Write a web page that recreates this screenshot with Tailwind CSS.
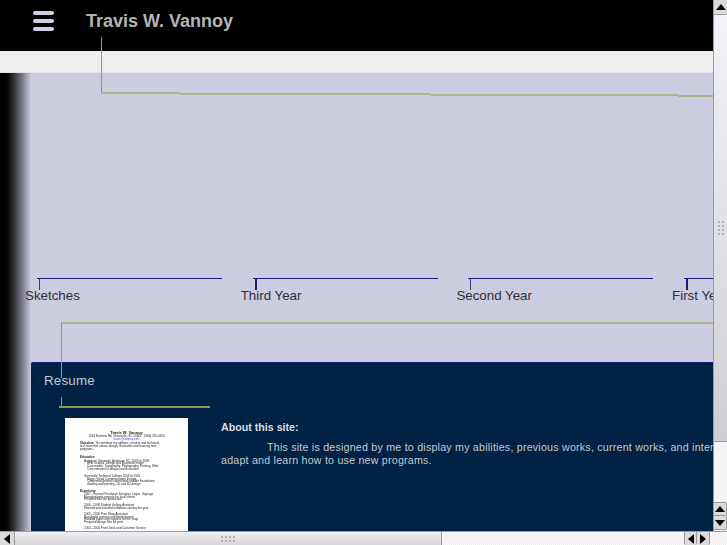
<!DOCTYPE html>
<html lang="en">
<head>
    <meta charset="UTF-8">
    <title>Travis W. Vannoy</title>
    <script src="https://cdn.jsdelivr.net/npm/@tailwindcss/browser@4"></script>
</head>
<body class="w-[727px] h-[545px] overflow-hidden bg-[#f6f6f6] font-['Liberation_Sans',sans-serif]">
    <div class="flex h-[531px]">
        <!-- Viewport -->
        <div class="relative w-[713px] flex flex-col overflow-hidden">
            <!-- Header -->
            <header class="h-[51px] bg-black flex items-start shrink-0">
                <div class="ml-[33px] mt-[11px] w-[21px] flex flex-col gap-[4.5px]">
                    <div class="h-[3.5px] rounded-full bg-[#cfcfe3]"></div>
                    <div class="h-[3.5px] rounded-full bg-[#cfcfe3]"></div>
                    <div class="h-[3.5px] rounded-full bg-[#cfcfe3]"></div>
                </div>
                <h1 class="ml-[32px] mt-[11px] text-[18px] leading-[21px] font-bold text-[#b4b4b4]">Travis W. Vannoy</h1>
            </header>
            <div class="h-[22px] bg-[#eeeeee] border-b border-[#e2e2e8] shrink-0"></div>

            <!-- Content -->
            <main class="relative flex-1 bg-[#cccce0] overflow-hidden">
                <div class="absolute left-0 top-0 bottom-0 w-[31px] bg-gradient-to-r from-black from-[10%] to-[#cccce0]"></div>

                <!-- Gallery tabs -->
                <div class="absolute left-[25px] top-[205px] flex gap-[18.7px] text-[13.33px] leading-[16px] text-[#2e2e38] whitespace-nowrap">
                    <div class="w-[197px]">
                        <div class="ml-[12px] w-[185px] h-px bg-[#1a1a80]"></div>
                        <div class="ml-[14px] w-px h-[11px] bg-[#3a3a90]"></div>
                        <p class="mt-[-2px]">Sketches</p>
                    </div>
                    <div class="w-[197px]">
                        <div class="ml-[12px] w-[185px] h-px bg-[#1a1a80]"></div>
                        <div class="ml-[14px] w-[2px] h-[11px] bg-[#1a1a80]"></div>
                        <p class="mt-[-2px]">Third Year</p>
                    </div>
                    <div class="w-[197px]">
                        <div class="ml-[12px] w-[185px] h-px bg-[#1a1a80]"></div>
                        <div class="ml-[14px] w-px h-[11px] bg-[#3a3a90]"></div>
                        <p class="mt-[-2px]">Second Year</p>
                    </div>
                    <div class="w-[197px]">
                        <div class="ml-[12px] w-[185px] h-px bg-[#1a1a80]"></div>
                        <div class="ml-[14px] w-[2px] h-[11px] bg-[#1a1a80]"></div>
                        <p class="mt-[-2px]">First Year</p>
                    </div>
                </div>

                <!-- Resume panel -->
                <section class="absolute left-[31px] top-[289px] w-[700px] h-[180px] bg-[#002244] border-t border-[#1a1a80] rounded-tl-[2px]">
                    <h2 class="ml-[13px] mt-[10px] text-[13.33px] leading-[16px] tracking-[0.2px] text-[#c4c8d4]">Resume</h2>
                    <div class="ml-[28px] mt-[17px] w-[151px] h-[2px] bg-[#97954f]"></div>
                    <div class="flex mt-[10px]">
                        <div class="ml-[34px] w-[123px] h-[140px] bg-white shrink-0 overflow-hidden pl-[15px] pt-[14px] text-[3px] leading-[2.8px] text-[#222] whitespace-nowrap blur-[0.3px]">
                            <p class="pr-[15px] text-center text-[4px] font-bold">Travis W. Vannoy</p>
                            <p class="pr-[15px] text-center">1234 Fairview Rd, Greenville, SC 29601 · (864) 555-0100</p>
                            <p class="pr-[15px] text-center text-[#44f]">travis@vannoy.com</p>
                            <p class="mt-[2px]"><b>Objective:</b> To contribute my abilities, creative and technical,</p>
                            <p>to a team that values design, illustration and learning new</p>
                            <p>programs.</p>
                            <p class="mt-[5px] font-bold">Education</p>
                            <p class="ml-[4px] mt-[1px]">Anderson University, Anderson SC, 2005 to 2009</p>
                            <p class="ml-[7px]">BFA, Graphic Design and Illustration major</p>
                            <p class="ml-[7px]">Coursework: Typography, Photography, Printing, Web</p>
                            <p class="ml-[7px]">Concentration in design and illustration</p>
                            <p class="ml-[4px] mt-[4px]">Greenville Technical College 2003 to 2005</p>
                            <p class="ml-[7px]">Major: Visual Communication Design</p>
                            <p class="ml-[7px]">Completed general coursework and Art Foundation</p>
                            <p class="ml-[7px]">drawing and painting, 2D and 3D design</p>
                            <p class="mt-[4px] font-bold">Experience</p>
                            <p class="ml-[4px]">2007 - Present Freelance Designer, Logos, Signage</p>
                            <p class="ml-[4px]">Managed print projects for local clients</p>
                            <p class="ml-[4px]">Prepared files for production</p>
                            <p class="ml-[4px] mt-[3px]">2006 - 2008 Student Gallery Assistant</p>
                            <p class="ml-[4px]">Planned and installed exhibitions during the year</p>
                            <p class="ml-[4px] mt-[3px]">2005 - 2006 Print Shop Assistant</p>
                            <p class="ml-[4px]">Ran digital presses and finished work</p>
                            <p class="ml-[4px]">Handled paper and supplies for the shop</p>
                            <p class="ml-[4px]">Prepared design files for print</p>
                            <p class="ml-[4px] mt-[3px]">2004 - 2005 Front Desk and Customer Service</p>
                        </div>
                        <div class="ml-[33px] mt-[3px] w-[520px] shrink-0 text-[10.67px] leading-[13px] tracking-[0.22px] text-[#c6c8cf] whitespace-nowrap">
                            <p class="font-bold text-[#dcdce4] tracking-[0px]">About this site:</p>
                            <p class="mt-[7px] indent-[46px]">This site is designed by me to display my abilities, previous works, current works, and interests.</p>
                            <p>adapt and learn how to use new programs.</p>
                        </div>
                    </div>
                </section>

                <!-- Olive guide lines over the content -->
                <div class="absolute left-[61px] top-[249px] w-[660px] h-[56px] border-t-2 border-l border-[#b4b28a] border-l-[#9c9a55]"></div>
                <div class="absolute left-[61px] top-[324px] w-px h-[10px] bg-[#97954f]"></div>
            </main>

            <!-- Lines running from the header -->
            <div class="absolute left-[101px] top-[37px] w-px h-[57px] bg-[#9c9a55]"></div>
            <div class="absolute left-[101px] top-[92px] w-[79px] h-[2px] bg-[#b4b28a]"></div>
            <div class="absolute left-[180px] top-[93px] w-[250px] h-[2px] bg-[#b4b28a]"></div>
            <div class="absolute left-[430px] top-[94px] w-[248px] h-[2px] bg-[#b4b28a]"></div>
            <div class="absolute left-[678px] top-[95px] w-[35px] h-[2px] bg-[#b4b28a]"></div>
        </div>

        <!-- Vertical scrollbar -->
        <div class="w-[14px] flex flex-col border-l border-[#9a9aa0] bg-[repeating-conic-gradient(#efefef_0_25%,#fbfbfb_0_50%)] bg-[length:2px_2px]">
            <div class="h-[15px] flex items-center justify-center bg-[#dcdcdc] border-b border-[#9a9a9a]">
                <svg width="10" height="6" viewBox="0 0 10 6"><path d="M5 0L10 6H0Z" fill="#000"/></svg>
            </div>
            <div class="h-[427px] flex items-center justify-center bg-gradient-to-b from-[#f2f2f8] to-[#cfcfd3] border-b border-[#9a9a9a]">
                <div class="w-[8px] h-[16px] bg-[radial-gradient(#b0b0b8_1px,transparent_1.5px)] bg-[length:4px_4px]"></div>
            </div>
            <div class="flex-1"></div>
            <div class="h-[14px] flex items-center justify-center bg-[#dcdcdc] border border-[#9a9a9a] border-l-0 rounded-r-[2px]">
                <svg width="10" height="6" viewBox="0 0 10 6"><path d="M5 0L10 6H0Z" fill="#000"/></svg>
            </div>
            <div class="h-[14px] mb-px flex items-center justify-center bg-[#dcdcdc] border border-t-0 border-[#9a9a9a] border-l-0 rounded-r-[2px]">
                <svg width="10" height="6" viewBox="0 0 10 6"><path d="M0 0H10L5 6Z" fill="#000"/></svg>
            </div>
        </div>
    </div>

    <!-- Horizontal scrollbar -->
    <div class="h-[14px] flex border-t border-[#9a9a9a] bg-[repeating-conic-gradient(#efefef_0_25%,#fbfbfb_0_50%)] bg-[length:2px_2px]">
        <div class="w-[15px] flex items-center justify-center bg-[#dcdcdc] border-r border-[#9a9a9a]">
            <svg width="6" height="10" viewBox="0 0 6 10"><path d="M6 0V10L0 5Z" fill="#000"/></svg>
        </div>
        <div class="w-[427px] flex items-center justify-center bg-gradient-to-b from-[#f0f0f4] to-[#d6d6da] border-r border-[#9a9a9a]">
            <div class="w-[16px] h-[8px] bg-[radial-gradient(#b0b0b8_1px,transparent_1.5px)] bg-[length:4px_4px]"></div>
        </div>
        <div class="w-[242px]"></div>
        <div class="w-[13px] flex items-center justify-center bg-[#dcdcdc] border-x border-[#9a9a9a] rounded-b-[2px]">
            <svg width="6" height="10" viewBox="0 0 6 10"><path d="M6 0V10L0 5Z" fill="#000"/></svg>
        </div>
        <div class="w-[13px] flex items-center justify-center bg-[#dcdcdc] border-r border-[#9a9a9a] rounded-b-[2px]">
            <svg width="6" height="10" viewBox="0 0 6 10"><path d="M0 0L6 5L0 10Z" fill="#000"/></svg>
        </div>
    </div>
</body>
</html>
